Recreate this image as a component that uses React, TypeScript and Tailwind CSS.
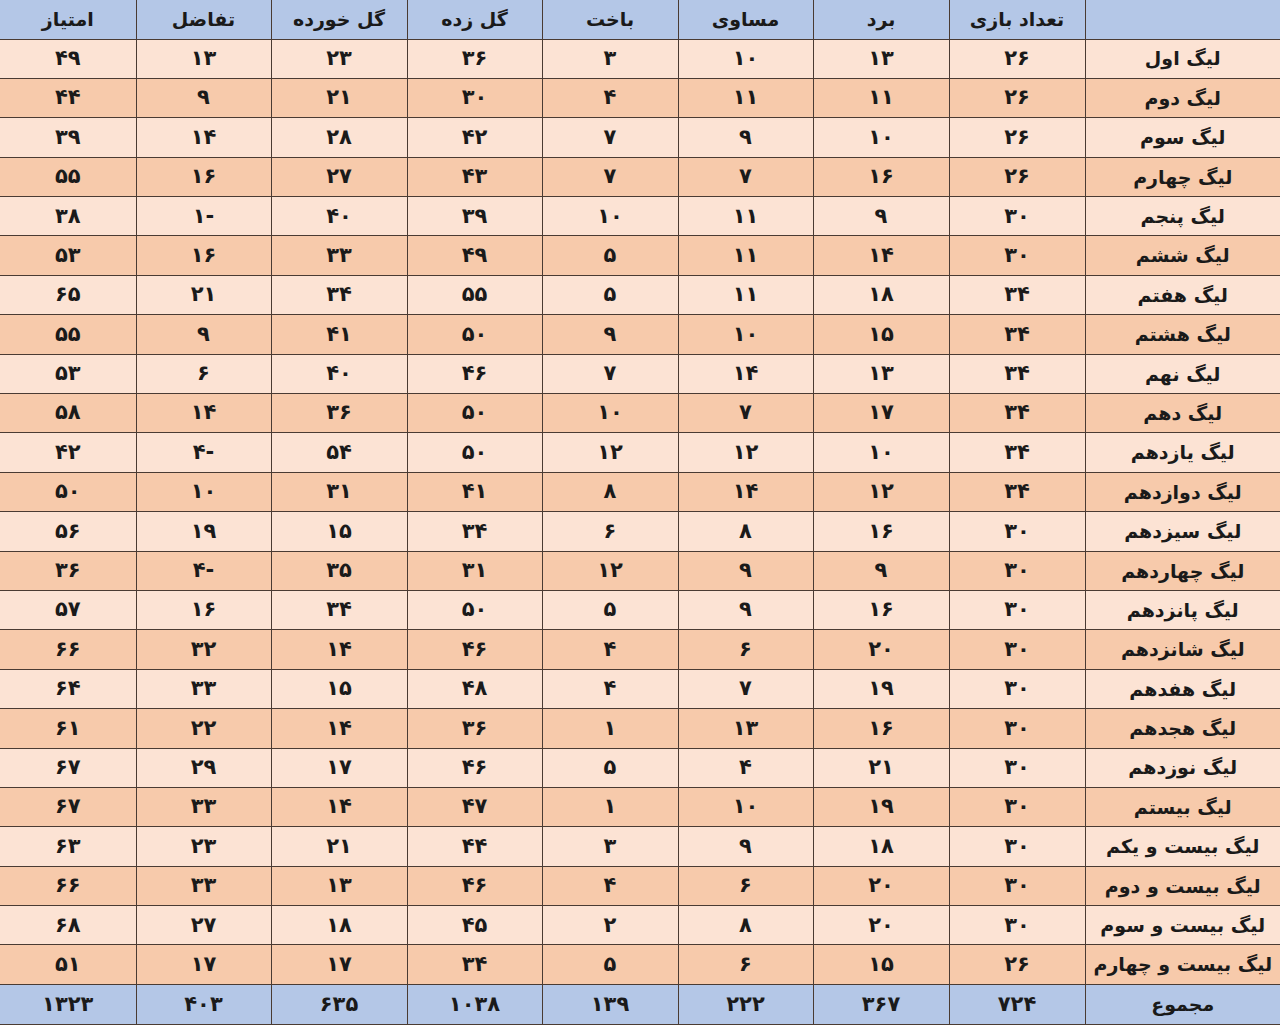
import React from 'react';

interface Row {
  name: string;
  values: string[];
}

// values: تعداد بازی، برد، مساوی، باخت، گل زده، گل خورده، تفاضل، امتیاز
const rows: Row[] = [
  { name: 'لیگ اول', values: ['۲۶', '۱۳', '۱۰', '۳', '۳۶', '۲۳', '۱۳', '۴۹'] },
  { name: 'لیگ دوم', values: ['۲۶', '۱۱', '۱۱', '۴', '۳۰', '۲۱', '۹', '۴۴'] },
  { name: 'لیگ سوم', values: ['۲۶', '۱۰', '۹', '۷', '۴۲', '۲۸', '۱۴', '۳۹'] },
  { name: 'لیگ چهارم', values: ['۲۶', '۱۶', '۷', '۷', '۴۳', '۲۷', '۱۶', '۵۵'] },
  { name: 'لیگ پنجم', values: ['۳۰', '۹', '۱۱', '۱۰', '۳۹', '۴۰', '-۱', '۳۸'] },
  { name: 'لیگ ششم', values: ['۳۰', '۱۴', '۱۱', '۵', '۴۹', '۳۳', '۱۶', '۵۳'] },
  { name: 'لیگ هفتم', values: ['۳۴', '۱۸', '۱۱', '۵', '۵۵', '۳۴', '۲۱', '۶۵'] },
  { name: 'لیگ هشتم', values: ['۳۴', '۱۵', '۱۰', '۹', '۵۰', '۴۱', '۹', '۵۵'] },
  { name: 'لیگ نهم', values: ['۳۴', '۱۳', '۱۴', '۷', '۴۶', '۴۰', '۶', '۵۳'] },
  { name: 'لیگ دهم', values: ['۳۴', '۱۷', '۷', '۱۰', '۵۰', '۳۶', '۱۴', '۵۸'] },
  { name: 'لیگ یازدهم', values: ['۳۴', '۱۰', '۱۲', '۱۲', '۵۰', '۵۴', '-۴', '۴۲'] },
  { name: 'لیگ دوازدهم', values: ['۳۴', '۱۲', '۱۴', '۸', '۴۱', '۳۱', '۱۰', '۵۰'] },
  { name: 'لیگ سیزدهم', values: ['۳۰', '۱۶', '۸', '۶', '۳۴', '۱۵', '۱۹', '۵۶'] },
  { name: 'لیگ چهاردهم', values: ['۳۰', '۹', '۹', '۱۲', '۳۱', '۳۵', '-۴', '۳۶'] },
  { name: 'لیگ پانزدهم', values: ['۳۰', '۱۶', '۹', '۵', '۵۰', '۳۴', '۱۶', '۵۷'] },
  { name: 'لیگ شانزدهم', values: ['۳۰', '۲۰', '۶', '۴', '۴۶', '۱۴', '۳۲', '۶۶'] },
  { name: 'لیگ هفدهم', values: ['۳۰', '۱۹', '۷', '۴', '۴۸', '۱۵', '۳۳', '۶۴'] },
  { name: 'لیگ هجدهم', values: ['۳۰', '۱۶', '۱۳', '۱', '۳۶', '۱۴', '۲۲', '۶۱'] },
  { name: 'لیگ نوزدهم', values: ['۳۰', '۲۱', '۴', '۵', '۴۶', '۱۷', '۲۹', '۶۷'] },
  { name: 'لیگ بیستم', values: ['۳۰', '۱۹', '۱۰', '۱', '۴۷', '۱۴', '۳۳', '۶۷'] },
  { name: 'لیگ بیست و یکم', values: ['۳۰', '۱۸', '۹', '۳', '۴۴', '۲۱', '۲۳', '۶۳'] },
  { name: 'لیگ بیست و دوم', values: ['۳۰', '۲۰', '۶', '۴', '۴۶', '۱۳', '۳۳', '۶۶'] },
  { name: 'لیگ بیست و سوم', values: ['۳۰', '۲۰', '۸', '۲', '۴۵', '۱۸', '۲۷', '۶۸'] },
  { name: 'لیگ بیست و چهارم', values: ['۲۶', '۱۵', '۶', '۵', '۳۴', '۱۷', '۱۷', '۵۱'] },
];

const headers = ['تعداد بازی', 'برد', 'مساوی', 'باخت', 'گل زده', 'گل خورده', 'تفاضل', 'امتیاز'];
const totals = ['۷۲۴', '۳۶۷', '۲۲۲', '۱۳۹', '۱۰۳۸', '۶۳۵', '۴۰۳', '۱۳۲۳'];

const cell = 'border-l border-b border-[#4a3b33] last:border-l-0 text-center align-middle p-0';
const num = `${cell} text-[21px]`;

const App: React.FC = () => {
  return (
    <div className="w-[1280px] h-[1025px] bg-white overflow-hidden">
      <table
        dir="rtl"
        className="w-[1280px] h-[1025px] table-fixed border-collapse text-[19px] font-bold text-[#1a1a1a] font-['DejaVu_Sans',sans-serif]"
      >
        <colgroup>
          <col className="w-[195px]" />
          <col className="w-[136px]" />
          <col className="w-[136px]" />
          <col className="w-[135px]" />
          <col className="w-[136px]" />
          <col className="w-[135px]" />
          <col className="w-[136px]" />
          <col className="w-[135px]" />
          <col className="w-[136px]" />
        </colgroup>
        <thead>
          <tr className="bg-[#b4c7e7] h-[39px]">
            <th className={cell}></th>
            {headers.map(h => (
              <th key={h} className={`${cell} font-bold`}>{h}</th>
            ))}
          </tr>
        </thead>
        <tbody>
          {rows.map((r, i) => (
            <tr key={r.name} className={`${i % 2 === 0 ? 'bg-[#fce3d4]' : 'bg-[#f7caab]'} h-[39.4px]`}>
              <td className={cell}>{r.name}</td>
              {r.values.map((v, j) => (
                <td key={j} className={num}>{v}</td>
              ))}
            </tr>
          ))}
          <tr className="bg-[#b4c7e7] h-[40px]">
            <td className={cell}>مجموع</td>
            {totals.map((v, j) => (
              <td key={j} className={num}>{v}</td>
            ))}
          </tr>
        </tbody>
      </table>
    </div>
  );
};

export default App;
